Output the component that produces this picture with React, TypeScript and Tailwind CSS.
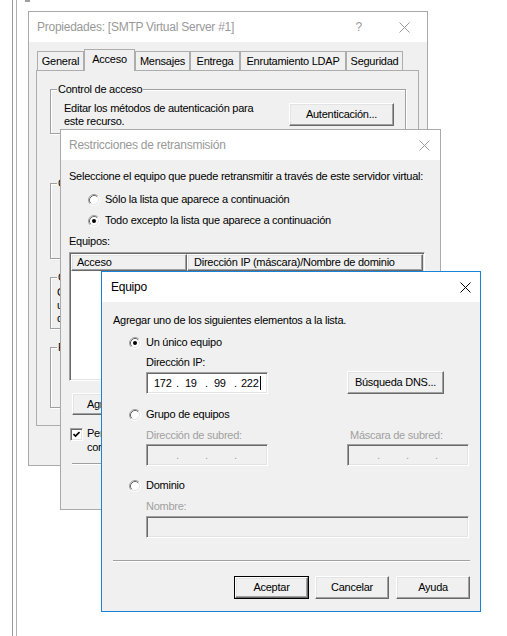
import React from 'react';

const raised =
  'bg-[#f0f0f0] border border-t-white border-l-white border-r-[#696969] border-b-[#696969] shadow-[inset_-1px_-1px_#a0a0a0,inset_1px_1px_#e3e3e3]';
const sunken =
  'border border-t-[#a0a0a0] border-l-[#a0a0a0] border-b-white border-r-white shadow-[inset_1px_1px_#696969,inset_-1px_-1px_#e3e3e3]';

function CloseGlyph({ color }: { color: string }) {
  return (
    <svg width="11" height="11" viewBox="0 0 11 11" className="shrink-0">
      <path d="M0.5 0.5L10.5 10.5M10.5 0.5L0.5 10.5" stroke={color} strokeWidth="1" fill="none" />
    </svg>
  );
}

function Radio({ checked = false }: { checked?: boolean }) {
  return (
    <svg width="12" height="12" viewBox="0 0 12 12" className="shrink-0">
      <circle cx="6" cy="6" r="5" fill="#fff" />
      <path d="M2.11 9.89A5.5 5.5 0 0 1 9.89 2.11" fill="none" stroke="#a0a0a0" />
      <path d="M2.82 9.18A4.5 4.5 0 0 1 9.18 2.82" fill="none" stroke="#696969" />
      <path d="M9.89 2.11A5.5 5.5 0 0 1 2.11 9.89" fill="none" stroke="#fff" />
      <path d="M9.18 2.82A4.5 4.5 0 0 1 2.82 9.18" fill="none" stroke="#e3e3e3" />
      {checked && <circle cx="6" cy="6" r="2" fill="#000" />}
    </svg>
  );
}

function Checkbox() {
  return (
    <div className={`${sunken} bg-white w-[13px] h-[13px] flex items-center justify-center shrink-0`}>
      <svg width="7" height="7" viewBox="0 0 7 7">
        <polyline points="0.5,3 2.5,5 6.5,1" fill="none" stroke="#000" strokeWidth="1.6" />
      </svg>
    </div>
  );
}

function Button({
  children,
  className = '',
  isDefault = false,
}: {
  children: React.ReactNode;
  className?: string;
  isDefault?: boolean;
}) {
  if (isDefault) {
    return (
      <div className={`border border-black ${className}`}>
        <div className={`${raised} w-full h-full flex items-center justify-center`}>{children}</div>
      </div>
    );
  }
  return <div className={`${raised} flex items-center justify-center ${className}`}>{children}</div>;
}

function Group({
  label,
  className = '',
  children,
}: {
  label: string;
  className?: string;
  children?: React.ReactNode;
}) {
  return (
    <div className={`relative border border-[#a0a0a0] shadow-[inset_1px_1px_white,1px_1px_white] ${className}`}>
      <span className="absolute left-[6px] -top-[7px] bg-[#f0f0f0] px-[1px] leading-[13px] whitespace-nowrap">
        {label}
      </span>
      {children}
    </div>
  );
}

function IpField({ values, disabled = false }: { values: string[]; disabled?: boolean }) {
  const tone = disabled ? 'text-[#a0a0a0]' : 'text-black';
  return (
    <div
      className={`${sunken} ${disabled ? 'bg-[#f0f0f0]' : 'bg-white'} ${tone} w-[122px] h-[22px] flex items-center pl-[7px] leading-[13px]`}
    >
      <span className="w-[22px]">{values[0]}</span>
      <span className="w-[9px]">.</span>
      <span className="w-[20px]">{values[1]}</span>
      <span className="w-[9px]">.</span>
      <span className="w-[20px]">{values[2]}</span>
      <span className="w-[7px]">.</span>
      <span>{values[3]}</span>
      {!disabled && <span className="ml-[1px] w-px h-[14px] bg-black" />}
    </div>
  );
}

const tabs = [
  { label: 'General', w: 'w-[47px]' },
  { label: 'Acceso', w: 'w-[51px]', selected: true },
  { label: 'Mensajes', w: 'w-[55px]' },
  { label: 'Entrega', w: 'w-[50px]' },
  { label: 'Enrutamiento LDAP', w: 'w-[106px]' },
  { label: 'Seguridad', w: 'w-[57px]' },
];

function PropertiesWindow() {
  return (
    <div className="absolute left-[28px] top-[11px] w-[400px] h-[455px] border border-[#aaaaaa] bg-[#f0f0f0] flex flex-col">
      <div className="h-[30px] bg-white flex items-center pl-[8px] text-[12px] text-[#999999] shrink-0">
        <span>Propiedades: [SMTP Virtual Server #1]</span>
        <span className="ml-auto">?</span>
        <span className="ml-[37px] mr-[17px]">
          <CloseGlyph color="#999999" />
        </span>
      </div>
      <div className="pt-[7px] pl-[7px]">
        <div className="relative z-10 flex items-end h-[21px] pl-[1px]">
          {tabs.map((t) =>
            t.selected ? (
              <div
                key={t.label}
                className={`${t.w} h-[22px] -mb-[1px] bg-[#f0f0f0] border border-b-0 border-[#adadad] flex justify-center pt-[3px] leading-[13px]`}
              >
                {t.label}
              </div>
            ) : (
              <div
                key={t.label}
                className={`${t.w} h-[19px] border border-b-0 border-[#adadad] flex justify-center pt-[3px] leading-[13px]`}
              >
                {t.label}
              </div>
            ),
          )}
        </div>
        <div className="w-[383px] h-[356px] border border-[#adadad] bg-[#f0f0f0] pl-[13px] pt-[18px]">
          <Group label="Control de acceso" className="w-[356px] h-[45px]">
            <div className="flex items-start justify-between pl-[13px] pr-[11px] pt-[12px]">
              <div className="leading-[13px]">
                <div>Editar los métodos de autenticación para</div>
                <div>este recurso.</div>
              </div>
              <Button className="w-[105px] h-[23px] mt-px">Autenticación...</Button>
            </div>
          </Group>
          <Group label="Comunicación segura" className="w-[356px] h-[76px] mt-[49px]" />
          <Group label="Control de conexión" className="w-[356px] h-[52px] mt-[18px]">
            <div className="pl-[6px] pt-[8px] leading-[13px]">
              <div>Conceder o denegar el acceso a este recurso</div>
              <div>utilizando direcciones IP o nombres de</div>
              <div>dominio de Internet.</div>
            </div>
          </Group>
          <Group label="Restricciones de retransmisión" className="w-[356px] h-[61px] mt-[18px]" />
        </div>
      </div>
    </div>
  );
}

function RelayWindow() {
  return (
    <div className="absolute left-[60px] top-[129px] w-[381px] h-[381px] border border-[#aaaaaa] bg-[#f0f0f0] flex flex-col">
      <div className="h-[30px] bg-white flex items-center pl-[8px] text-[12px] text-[#999999] shrink-0">
        <span>Restricciones de retransmisión</span>
        <span className="ml-auto mr-[10px]">
          <CloseGlyph color="#999999" />
        </span>
      </div>
      <div className="pl-[8px] pt-[10px] leading-[13px]">
        <div className="whitespace-nowrap">
          Seleccione el equipo que puede retransmitir a través de este servidor virtual:
        </div>
        <div className="mt-[10px] pl-[19px] h-[13px] flex items-center gap-[5px]">
          <Radio />
          <span>Sólo la lista que aparece a continuación</span>
        </div>
        <div className="mt-[8px] pl-[19px] h-[13px] flex items-center gap-[5px]">
          <Radio checked />
          <span>Todo excepto la lista que aparece a continuación</span>
        </div>
        <div className="mt-[8px]">Equipos:</div>
        <div className={`${sunken} bg-white w-[356px] h-[129px] mt-[4px] p-[1px]`}>
          <div className="flex h-[17px]">
            <div className={`${raised} w-[116px] pl-[5px] flex items-center`}>Acceso</div>
            <div className={`${raised} w-[236px] pl-[6px] flex items-center whitespace-nowrap`}>
              Dirección IP (máscara)/Nombre de dominio
            </div>
          </div>
        </div>
        <Button className="w-[75px] h-[22px] mt-[12px] ml-[3px]">Agregar...</Button>
        <div className="mt-[11px] flex items-start gap-[4px] ml-[1px]">
          <div className="mt-[2px]">
            <Checkbox />
          </div>
          <div className="leading-[14px]">
            <div>Permitir que todos los equipos que se autentiquen</div>
            <div>correctamente retransmitan, independientemente de la lista anterior.</div>
          </div>
        </div>
        <div className="mt-[9px] ml-[3px] mr-[8px] border-t border-t-[#a0a0a0] border-b border-b-white" />
      </div>
    </div>
  );
}

function ComputerWindow() {
  return (
    <div className="absolute left-[101px] top-[271px] w-[380px] h-[341px] border border-[#1883d7] bg-[#f0f0f0] flex flex-col">
      <div className="h-[30px] bg-white flex items-center pl-[9px] text-[12px] text-black shrink-0">
        <span>Equipo</span>
        <span className="ml-auto mr-[9px]">
          <CloseGlyph color="#000000" />
        </span>
      </div>
      <div className="pl-[11px] pr-[10px] pt-[12px] leading-[13px]">
        <div>Agregar uno de los siguientes elementos a la lista.</div>
        <div className="mt-[9px] pl-[16px] h-[13px] flex items-center gap-[5px]">
          <Radio checked />
          <span>Un único equipo</span>
        </div>
        <div className="pl-[33px]">
          <div className="mt-[7px]">Dirección IP:</div>
          <div className="mt-[3px] flex items-start">
            <IpField values={['172', '19', '99', '222']} />
            <Button className="w-[97px] h-[23px] -mt-px ml-[79px]">Búsqueda DNS...</Button>
          </div>
        </div>
        <div className="mt-[14px] pl-[16px] h-[13px] flex items-center gap-[5px]">
          <Radio />
          <span>Grupo de equipos</span>
        </div>
        <div className="pl-[33px] flex">
          <div>
            <div className="mt-[8px] text-[#a0a0a0]">Dirección de subred:</div>
            <div className="mt-[2px]">
              <IpField values={['', '', '', '']} disabled />
            </div>
          </div>
          <div className="ml-[79px]">
            <div className="mt-[8px] pl-[3px] text-[#a0a0a0]">Máscara de subred:</div>
            <div className="mt-[2px]">
              <IpField values={['', '', '', '']} disabled />
            </div>
          </div>
        </div>
        <div className="mt-[13px] pl-[16px] h-[13px] flex items-center gap-[5px]">
          <Radio />
          <span>Dominio</span>
        </div>
        <div className="pl-[33px]">
          <div className="mt-[8px] text-[#a0a0a0]">Nombre:</div>
          <div className={`${sunken} bg-[#f0f0f0] w-[323px] h-[22px] mt-[3px]`} />
        </div>
        <div className="mt-[22px] border-t border-t-[#a0a0a0] border-b border-b-white" />
        <div className="mt-[14px] flex justify-end">
          <Button isDefault className="w-[75px] h-[23px]">
            Aceptar
          </Button>
          <Button className="w-[74px] h-[23px] ml-[6px]">Cancelar</Button>
          <Button className="w-[74px] h-[23px] ml-[7px]">Ayuda</Button>
        </div>
      </div>
    </div>
  );
}

export default function App() {
  return (
    <div className="relative w-[507px] h-[636px] overflow-hidden bg-white text-[11px] tracking-[-0.25px] text-black font-['Liberation_Sans',Arial,sans-serif]">
      <div className="absolute left-[12px] top-0 h-full w-[5px] border-x border-l-[#9a9a9a] border-r-[#b0b0b0]" />
      <div className="absolute left-[25px] top-0 w-[5px] h-[2px] bg-[#a0a0a0]" />
      <PropertiesWindow />
      <RelayWindow />
      <ComputerWindow />
    </div>
  );
}
